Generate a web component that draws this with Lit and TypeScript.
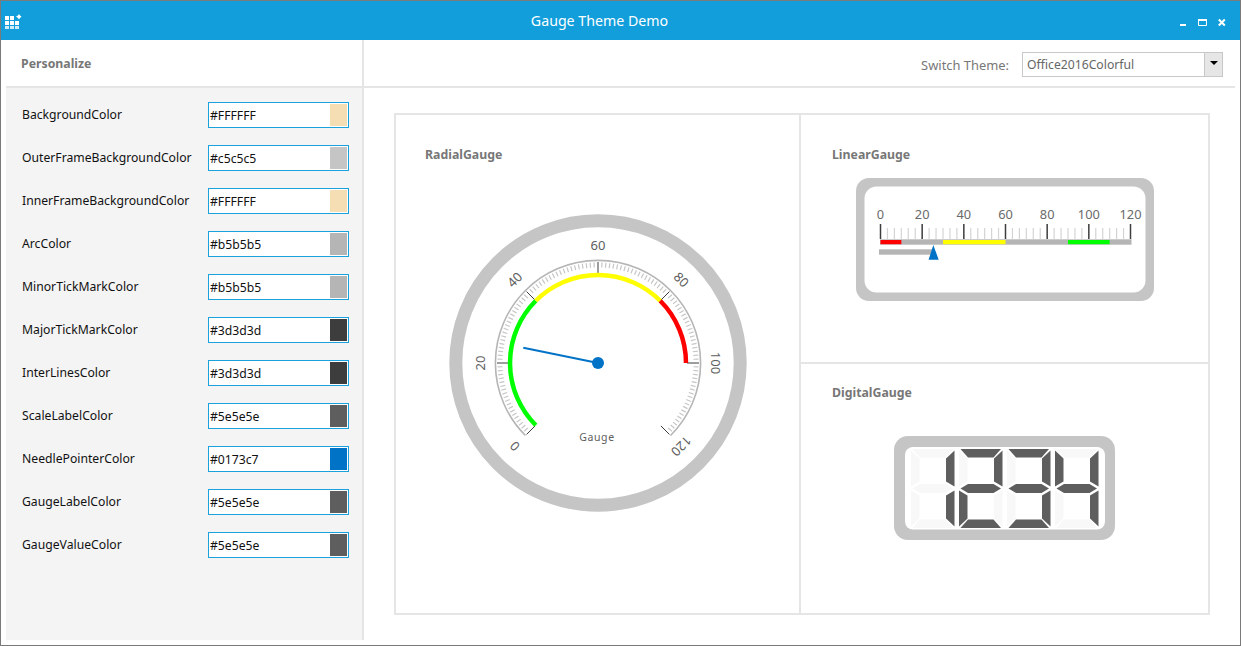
import { LitElement, html, svg, css } from 'lit';
import { customElement } from 'lit/decorators.js';

const ROWS = [
    ['BackgroundColor', '#FFFFFF', '#f5deb3'],
    ['OuterFrameBackgroundColor', '#c5c5c5', '#c5c5c5'],
    ['InnerFrameBackgroundColor', '#FFFFFF', '#f5deb3'],
    ['ArcColor', '#b5b5b5', '#b5b5b5'],
    ['MinorTickMarkColor', '#b5b5b5', '#b5b5b5'],
    ['MajorTickMarkColor', '#3d3d3d', '#3d3d3d'],
    ['InterLinesColor', '#3d3d3d', '#3d3d3d'],
    ['ScaleLabelColor', '#5e5e5e', '#5e5e5e'],
    ['NeedlePointerColor', '#0173c7', '#0173c7'],
    ['GaugeLabelColor', '#5e5e5e', '#5e5e5e'],
    ['GaugeValueColor', '#5e5e5e', '#5e5e5e'],
];

/** Point on a circle; deg is measured clockwise from straight up. */
const polar = (r: number, deg: number, c = 150) => {
    const a = (deg * Math.PI) / 180;
    return [c + r * Math.sin(a), c - r * Math.cos(a)];
};

const arc = (r: number, from: number, to: number) => {
    const [x1, y1] = polar(r, from);
    const [x2, y2] = polar(r, to);
    return `M${x1} ${y1}A${r} ${r} 0 ${to - from > 180 ? 1 : 0} 1 ${x2} ${y2}`;
};

@customElement('radial-gauge')
export class RadialGauge extends LitElement {
    static styles = css`
        :host { display: block; width: 300px; height: 300px; }
        svg { display: block; }
        text { font-family: 'Noto Sans', 'Open Sans', sans-serif; fill: #5e5e5e; }
    `;

    render() {
        const toAngle = (v: number) => -135 + (v / 120) * 270;
        const minor = [];
        for (let v = 0; v <= 120; v++) {
            if (v % 20 === 0) continue;
            const [x1, y1] = polar(95.5, toAngle(v));
            const [x2, y2] = polar(100.5, toAngle(v));
            minor.push(svg`<line x1=${x1} y1=${y1} x2=${x2} y2=${y2} stroke="#c6c6c6" stroke-width="1.2"></line>`);
        }
        const major = [0, 20, 40, 60, 80, 100, 120].map(v => {
            const [x1, y1] = polar(89, toAngle(v));
            const [x2, y2] = polar(101, toAngle(v));
            const [lx, ly] = polar(118, toAngle(v));
            return svg`
                <line x1=${x1} y1=${y1} x2=${x2} y2=${y2} stroke="#3d3d3d" stroke-width="1"></line>
                <text x=${lx} y=${ly} font-size="13" text-anchor="middle" dominant-baseline="central"
                      transform="rotate(${toAngle(v)} ${lx} ${ly})">${v}</text>`;
        });
        return html`
            <svg width="300" height="300" viewBox="0 0 300 300">
                <circle cx="150" cy="150" r="142.2" fill="#fff" stroke="#c5c5c5" stroke-width="13"></circle>
                <path d=${arc(102.6, -135, 135)} fill="none" stroke="#b5b5b5" stroke-width="1.6"></path>
                ${minor}
                ${major}
                <path d=${arc(88, -135, -45)} fill="none" stroke="#00ff00" stroke-width="4.5"></path>
                <path d=${arc(88, -45, 45)} fill="none" stroke="#ffff00" stroke-width="4.5"></path>
                <path d=${arc(88, 45, 90)} fill="none" stroke="#ff0000" stroke-width="4.5"></path>
                <line x1="150" y1="150" x2="75.3" y2="134.7" stroke="#0173c7" stroke-width="2"></line>
                <circle cx="150" cy="150" r="6" fill="#0173c7"></circle>
                <text x="149" y="224" font-size="10.5" letter-spacing="0.6" text-anchor="middle" dominant-baseline="central">Gauge</text>
            </svg>
        `;
    }
}

@customElement('linear-gauge')
export class LinearGauge extends LitElement {
    static styles = css`
        :host { display: block; width: 298px; height: 123px; }
        svg { display: block; }
        text { font-family: 'Noto Sans', 'Open Sans', sans-serif; fill: #6a6a6a; }
    `;

    render() {
        const x0 = 24.5;
        const step = 250 / 120;
        const xOf = (v: number) => x0 + v * step;
        const ticks = [];
        for (let v = 0; v <= 120; v += 20) {
            ticks.push(svg`
                <line x1=${xOf(v)} y1="46" x2=${xOf(v)} y2="61" stroke="#3d3d3d" stroke-width="1.5"></line>
                <text x=${xOf(v)} y="36" font-size="12.8" text-anchor="middle" dominant-baseline="central">${v}</text>`);
            if (v === 120) break;
            for (let i = 1; i < 6; i++) {
                const x = xOf(v + (i * 20) / 6);
                ticks.push(svg`<line x1=${x} y1="50" x2=${x} y2="61" stroke="#d4d4d4" stroke-width="1.2"></line>`);
            }
        }
        const band = (from: number, to: number, color: string) =>
            svg`<rect x=${xOf(from)} y="62" width=${xOf(to) - xOf(from)} height="4.2" fill=${color}></rect>`;
        return html`
            <svg width="298" height="123" viewBox="0 0 298 123">
                <rect width="298" height="123" rx="13" fill="#c5c5c5"></rect>
                <rect x="8.5" y="8.5" width="281" height="106" rx="12" fill="#fff"></rect>
                ${ticks}
                <rect x="24" y="61.3" width="251.5" height="5.4" fill="#b5b5b5"></rect>
                ${band(0, 10, '#ff0000')}
                ${band(30, 60, '#ffff00')}
                ${band(90, 110, '#00ff00')}
                <rect x="23" y="71.3" width="54" height="5.4" fill="#b5b5b5"></rect>
                <polygon points="77.3,67 72.6,81.7 82.7,81.7" fill="#0173c7"></polygon>
            </svg>
        `;
    }
}

const W = 43.5;
const H = 79;
const M = 39.5;
const SEGS: Record<string, string> = {
    a: `1.5,0 ${W - 1.5},0 ${W - 9},8.5 9,8.5`,
    b: `${W},1.5 ${W},${M - 2} ${W - 8.5},${M - 7} ${W - 8.5},9.5`,
    c: `${W},${M + 2} ${W},${H - 1.5} ${W - 8.5},${H - 9.5} ${W - 8.5},${M + 7}`,
    d: `1.5,${H} ${W - 1.5},${H} ${W - 9},${H - 8.5} 9,${H - 8.5}`,
    e: `0,${M + 2} 0,${H - 1.5} 8.5,${H - 9.5} 8.5,${M + 7}`,
    f: `0,1.5 0,${M - 2} 8.5,${M - 7} 8.5,9.5`,
    g: `1.5,${M} 9,${M - 4.5} ${W - 9},${M - 4.5} ${W - 1.5},${M} ${W - 9},${M + 4.5} 9,${M + 4.5}`,
};
const LIT: Record<string, string> = { '1': 'bc', '2': 'abged', '3': 'abgcd', '4': 'fgbc' };

@customElement('digital-gauge')
export class DigitalGauge extends LitElement {
    static styles = css`
        :host { display: block; width: 221px; height: 104px; }
        svg { display: block; }
    `;

    render() {
        const digits = [...'1234'].map((d, i) => svg`
            <g transform="translate(${17 + i * 48} 13)">
                ${Object.keys(SEGS).map(k => svg`<polygon points=${SEGS[k]} fill=${LIT[d].includes(k) ? '#5e5e5e' : '#f8f8f8'}></polygon>`)}
            </g>`);
        return html`
            <svg width="221" height="104" viewBox="0 0 221 104">
                <rect width="221" height="104" rx="14" fill="#c5c5c5"></rect>
                <rect x="11" y="11" width="200" height="82.5" rx="8" fill="#fff"></rect>
                ${digits}
            </svg>
        `;
    }
}

@customElement('app-root')
export class AppRoot extends LitElement {
    static styles = css`
        :host { display: block; font-family: 'Noto Sans', 'Open Sans', sans-serif; }
        .window {
            width: 1241px; height: 646px; box-sizing: border-box;
            border: 1px solid #7a7a7a; background: #fff;
            display: flex; flex-direction: column; overflow: hidden;
        }
        .titlebar {
            height: 39px; flex: none; background: #129edb; color: #fff;
            display: flex; align-items: center; position: relative;
        }
        .app-icon { margin: 1px 0 0 2px; display: block; }
        .title {
            position: absolute; left: 0; right: 0; text-align: center;
            font-size: 14.2px; line-height: 41px; padding-right: 42px;
        }
        .controls { margin-left: auto; display: flex; align-items: center; gap: 10px; padding: 4px 13px 0 0; }
        .controls svg { display: block; }
        .body { flex: 1; display: flex; padding: 0 5px 5px; min-height: 0; }
        aside {
            width: 356px; flex: none; display: flex; flex-direction: column;
            border-right: 2px solid #e5e5e5;
        }
        .side-head {
            height: 46px; flex: none; border-bottom: 2px solid #e5e5e5;
            display: flex; align-items: center; padding-left: 15px;
            font-size: 12.3px; font-weight: 700; color: #777;
        }
        .rows { flex: 1; background: #f4f4f4; padding: 14px 0 0 16px; display: flex; flex-direction: column; gap: 17px; }
        .row { display: flex; align-items: center; height: 26px; }
        .row label { width: 186px; font-size: 12.2px; color: #111; position: relative; top: -1px; }
        .field {
            width: 141px; height: 26px; box-sizing: border-box;
            border: 1px solid #1ba1dc; background: #fff;
            display: flex; align-items: center; justify-content: space-between;
            padding: 1px; font-size: 12.2px; color: #111;
        }
        .swatch { width: 17px; height: 22px; }
        main { flex: 1; display: flex; flex-direction: column; min-width: 0; }
        .main-head {
            height: 46px; flex: none; box-sizing: content-box; border-bottom: 2px solid #e5e5e5;
            display: flex; align-items: center; justify-content: flex-end; padding-right: 12px;
            font-size: 12.9px; color: #777;
        }
        .head-label { position: relative; top: 2px; }
        .select {
            width: 201px; height: 25px; box-sizing: border-box; margin: 2px 0 0 13px;
            border: 1px solid #c8c8c8; display: flex; align-items: stretch;
        }
        .select span { flex: 1; padding-left: 4px; line-height: 23px; color: #666; font-size: 12.2px; }
        .select i {
            width: 17px; background: #e6e6e6; border-left: 1px solid #c8c8c8;
            display: flex; align-items: center; justify-content: center;
        }
        .select i::after {
            content: ''; border-left: 4px solid transparent; border-right: 4px solid transparent;
            border-top: 4px solid #000; margin-top: -2px;
        }
        .content { flex: 1; padding: 25px 25px 25px 30px; min-height: 0; display: flex; }
        .panel {
            flex: 1; border: 2px solid #e5e5e5;
            display: grid; grid-template-columns: 405px 1fr; grid-template-rows: 249px 1fr;
        }
        .cell { display: flex; flex-direction: column; align-items: center; min-width: 0; }
        .cell h3 {
            align-self: flex-start; margin: 0; font-size: 12.3px; font-weight: 700; color: #777;
            line-height: 18px; padding: 31px 0 0 29px;
        }
        .radial { grid-row: 1 / span 2; border-right: 2px solid #e5e5e5; }
        .radial radial-gauge { margin-top: 49px; }
        .linear { border-bottom: 2px solid #e5e5e5; }
        .linear h3 { padding-left: 31px; }
        .linear linear-gauge { margin-top: 14px; }
        .digital h3 { padding-left: 31px; padding-top: 20px; }
        .digital digital-gauge { margin-top: 34px; }
    `;

    render() {
        return html`
            <div class="window">
                <div class="titlebar">
                    <svg class="app-icon" width="20" height="20" viewBox="0 0 20 20" fill="#fff">
                        <rect x="2" y="5" width="4" height="4"></rect>
                        <rect x="7" y="5" width="4" height="4"></rect>
                        <rect x="2" y="10" width="4" height="4"></rect>
                        <rect x="7" y="10" width="4" height="4"></rect>
                        <rect x="12" y="10" width="4" height="4"></rect>
                        <rect x="2" y="15" width="4" height="3" opacity=".8"></rect>
                        <rect x="7" y="15" width="4" height="3" opacity=".8"></rect>
                        <rect x="12" y="15" width="4" height="3" opacity=".8"></rect>
                        <polygon points="16,3 17,4.5 18.5,5.5 17,7 16,8.5 15,7 13,5.5 15,4.5"></polygon>
                    </svg>
                    <div class="title">Gauge Theme Demo</div>
                    <div class="controls">
                        <svg width="9" height="9" viewBox="0 0 9 9"><rect x="1" y="6" width="6" height="2" fill="#fff"></rect></svg>
                        <svg width="10" height="9" viewBox="0 0 10 9"><path d="M.5 1.5h8v6h-8z" fill="none" stroke="#fff"></path><rect x="0" y="1" width="9" height="2" fill="#fff"></rect></svg>
                        <svg width="9" height="9" viewBox="0 0 9 9"><path d="M.8 1.5l6 6M6.8 1.5l-6 6" stroke="#fff" stroke-width="2" fill="none"></path></svg>
                    </div>
                </div>
                <div class="body">
                    <aside>
                        <div class="side-head">Personalize</div>
                        <div class="rows">
                            ${ROWS.map(([name, value, color]) => html`
                                <div class="row">
                                    <label>${name}</label>
                                    <div class="field"><span>${value}</span><div class="swatch" style="background:${color}"></div></div>
                                </div>`)}
                        </div>
                    </aside>
                    <main>
                        <div class="main-head">
                            <span class="head-label">Switch Theme:</span>
                            <div class="select"><span>Office2016Colorful</span><i></i></div>
                        </div>
                        <div class="content">
                            <div class="panel">
                                <div class="cell radial"><h3>RadialGauge</h3><radial-gauge></radial-gauge></div>
                                <div class="cell linear"><h3>LinearGauge</h3><linear-gauge></linear-gauge></div>
                                <div class="cell digital"><h3>DigitalGauge</h3><digital-gauge></digital-gauge></div>
                            </div>
                        </div>
                    </main>
                </div>
            </div>
        `;
    }
}
